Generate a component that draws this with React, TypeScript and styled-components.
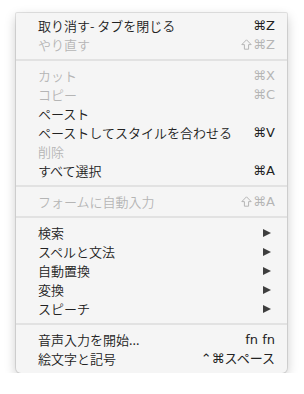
import React from 'react';
import { createGlobalStyle, styled } from 'styled-components';

const GlobalStyle = createGlobalStyle`
  html, body {
    margin: 0;
    padding: 0;
    background: #ffffff;
  }
  body {
    font-family: "Noto Sans CJK JP", "Liberation Sans", sans-serif;
    -webkit-font-smoothing: antialiased;
  }
`;

type MenuEntry =
  | { kind: 'item'; label: string; shortcut?: string; shift?: boolean; disabled?: boolean; submenu?: boolean }
  | { kind: 'separator' };

const entries: MenuEntry[] = [
  { kind: 'item', label: '取り消す- タブを閉じる', shortcut: '⌘Z' },
  { kind: 'item', label: 'やり直す', shortcut: '⌘Z', shift: true, disabled: true },
  { kind: 'separator' },
  { kind: 'item', label: 'カット', shortcut: '⌘X', disabled: true },
  { kind: 'item', label: 'コピー', shortcut: '⌘C', disabled: true },
  { kind: 'item', label: 'ペースト' },
  { kind: 'item', label: 'ペーストしてスタイルを合わせる', shortcut: '⌘V' },
  { kind: 'item', label: '削除', disabled: true },
  { kind: 'item', label: 'すべて選択', shortcut: '⌘A' },
  { kind: 'separator' },
  { kind: 'item', label: 'フォームに自動入力', shortcut: '⌘A', shift: true, disabled: true },
  { kind: 'separator' },
  { kind: 'item', label: '検索', submenu: true },
  { kind: 'item', label: 'スペルと文法', submenu: true },
  { kind: 'item', label: '自動置換', submenu: true },
  { kind: 'item', label: '変換', submenu: true },
  { kind: 'item', label: 'スピーチ', submenu: true },
  { kind: 'separator' },
  { kind: 'item', label: '音声入力を開始...', shortcut: 'fn fn' },
  { kind: 'item', label: '絵文字と記号', shortcut: '⌃⌘スペース' },
];

const Page = styled.div`
  padding: 13px 0 0 16px;
`;

const Menu = styled.ul`
  list-style: none;
  margin: 0;
  padding: 3px 0 5px;
  width: 271px;
  box-sizing: border-box;
  background: #f5f5f5;
  border-radius: 1px 1px 5px 5px;
  box-shadow:
    0 0 0 1px rgba(0, 0, 0, 0.1),
    0 4px 12px rgba(0, 0, 0, 0.22);
`;

const Item = styled.li<{ $disabled?: boolean }>`
  display: flex;
  align-items: center;
  justify-content: space-between;
  height: 19px;
  padding: 0 12px 0 22px;
  font-size: 13px;
  line-height: 19px;
  color: ${({ $disabled }) => ($disabled ? '#b5b5b5' : '#222222')};
  white-space: nowrap;
`;

const Label = styled.span`
  font-weight: 350;
`;

const Shortcut = styled.span`
  display: flex;
  align-items: center;
  gap: 1px;
  font-family: "DejaVu Sans", "Noto Sans CJK JP", sans-serif;
  font-size: 13px;
`;

const SubArrow = styled.span`
  width: 0;
  height: 0;
  margin-right: 4px;
  border-top: 4.5px solid transparent;
  border-bottom: 4.5px solid transparent;
  border-left: 8px solid #3e3e3e;
`;

const Separator = styled.li`
  height: 12px;
  display: flex;
  align-items: center;

  &::before {
    content: '';
    flex: 1;
    height: 2px;
    background: #e2e2e2;
  }
`;

const ShiftIcon = () => (
  <svg width="11" height="11" viewBox="0 0 11 11" fill="none">
    <path
      d="M5.5 0.8 L10.2 5.6 H7.6 V10.2 H3.4 V5.6 H0.8 Z"
      stroke="currentColor"
      strokeWidth="1"
      strokeLinejoin="round"
    />
  </svg>
);

export default function App() {
  return (
    <Page>
      <GlobalStyle />
      <Menu>
        {entries.map((entry, i) =>
          entry.kind === 'separator' ? (
            <Separator key={i} />
          ) : (
            <Item key={i} $disabled={entry.disabled}>
              <Label>{entry.label}</Label>
              {entry.shortcut && (
                <Shortcut>
                  {entry.shift && <ShiftIcon />}
                  {entry.shortcut}
                </Shortcut>
              )}
              {entry.submenu && <SubArrow />}
            </Item>
          )
        )}
      </Menu>
    </Page>
  );
}
